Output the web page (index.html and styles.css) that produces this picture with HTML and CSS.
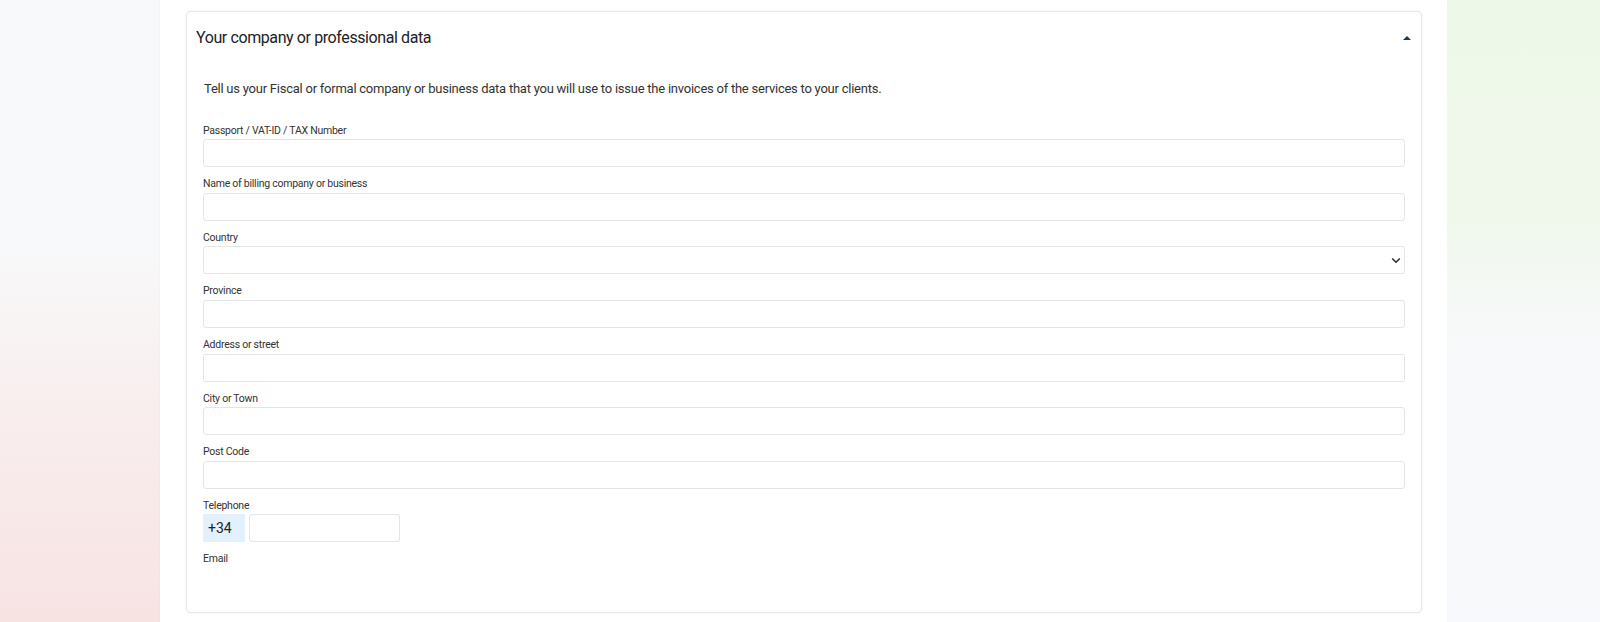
FILE: index.html
```html
<!DOCTYPE html>
<html lang="en">
<head>
<meta charset="utf-8">
<title>Your company or professional data</title>
<link rel="stylesheet" href="styles.css">
</head>
<body>
<div class="page">
  <aside class="side side-left"></aside>
  <main class="main">
    <section class="card">
      <header class="card-head">
        <h2 class="card-title">Your company or professional data</h2>
        <span class="caret" aria-hidden="true"></span>
      </header>
      <div class="card-body">
        <p class="intro">Tell us your Fiscal or formal company or business data that you will use to issue the invoices of the services to your clients.</p>
        <div class="field">
          <label class="label">Passport / VAT-ID / TAX Number</label>
          <div class="input"></div>
        </div>
        <div class="field">
          <label class="label">Name of billing company or business</label>
          <div class="input"></div>
        </div>
        <div class="field">
          <label class="label">Country</label>
          <div class="input select">
            <svg class="chev" width="10" height="7" viewBox="0 0 10 7"><path d="M1.2 1.5 L5 5.2 L8.8 1.5" fill="none" stroke="#2b2b2b" stroke-width="1.6"/></svg>
          </div>
        </div>
        <div class="field">
          <label class="label">Province</label>
          <div class="input"></div>
        </div>
        <div class="field">
          <label class="label">Address or street</label>
          <div class="input"></div>
        </div>
        <div class="field">
          <label class="label">City or Town</label>
          <div class="input"></div>
        </div>
        <div class="field">
          <label class="label">Post Code</label>
          <div class="input"></div>
        </div>
        <div class="field">
          <label class="label">Telephone</label>
          <div class="phone">
            <span class="prefix">+34</span>
            <div class="input phone-input"></div>
          </div>
        </div>
        <div class="field field-last">
          <label class="label">Email</label>
        </div>
      </div>
    </section>
  </main>
  <aside class="side side-right"></aside>
</div>
</body>
</html>
```
FILE: styles.css
```css
html, body {
  margin: 0;
  padding: 0;
}
body {
  font-family: Roboto, "Liberation Sans", Arial, sans-serif;
  color: #333;
  background: #fff;
}
.page {
  display: grid;
  grid-template-columns: 160px 1287px 153px;
  height: 622px;
  overflow: hidden;
}
.side-left {
  background: linear-gradient(180deg, #f7f9fb 0%, #f8f9fa 40%, #f9eeee 65%, #f8e3e3 100%);
}
.side-right {
  background: linear-gradient(180deg, #eef8e8 0%, #f0f8ec 35%, #f7f9fa 55%, #f8f9fc 100%);
}
.main {
  background: #fff;
  padding: 11px 25px 0 26px;
  box-shadow: 0 0 2px rgba(0,0,0,0.06);
}
.card {
  border: 1px solid #e4e6e8;
  border-radius: 4px;
  box-shadow: 0 0 3px rgba(0,0,0,0.04);
  height: 602px;
  box-sizing: border-box;
}
.card-head {
  display: flex;
  align-items: center;
  justify-content: space-between;
  padding: 13.5px 10px 0 9px;
}
.card-title {
  margin: 0;
  font-size: 16px;
  line-height: 24px;
  font-weight: 400;
  letter-spacing: -0.4px;
  color: #222;
}
.caret {
  width: 0;
  height: 0;
  border-left: 4px solid transparent;
  border-right: 4px solid transparent;
  border-bottom: 4px solid #1b3a57;
  margin-top: 0;
}
.card-body {
  padding: 29px 16px 0 16px;
}
.intro {
  margin: 0 0 25.2px 1px;
  font-size: 13px;
  line-height: 20px;
  letter-spacing: -0.24px;
  color: #333;
}
.field {
  margin-bottom: 10.1px;
}
.label {
  display: block;
  font-size: 10.5px;
  line-height: 14px;
  letter-spacing: -0.25px;
  margin-bottom: 1.5px;
  color: #333;
}
.input {
  height: 28px;
  box-sizing: border-box;
  border: 1px solid #e2e4e6;
  border-radius: 3px;
  background: #fff;
}
.select {
  display: flex;
  align-items: center;
  justify-content: flex-end;
  padding-right: 3px;
}
.phone {
  display: flex;
  gap: 4px;
}
.prefix {
  width: 42px;
  height: 28px;
  box-sizing: border-box;
  padding-left: 5px;
  background: #e2f1fb;
  font-size: 14px;
  line-height: 28px;
  color: #222;
}
.phone-input {
  width: 151px;
}
```
